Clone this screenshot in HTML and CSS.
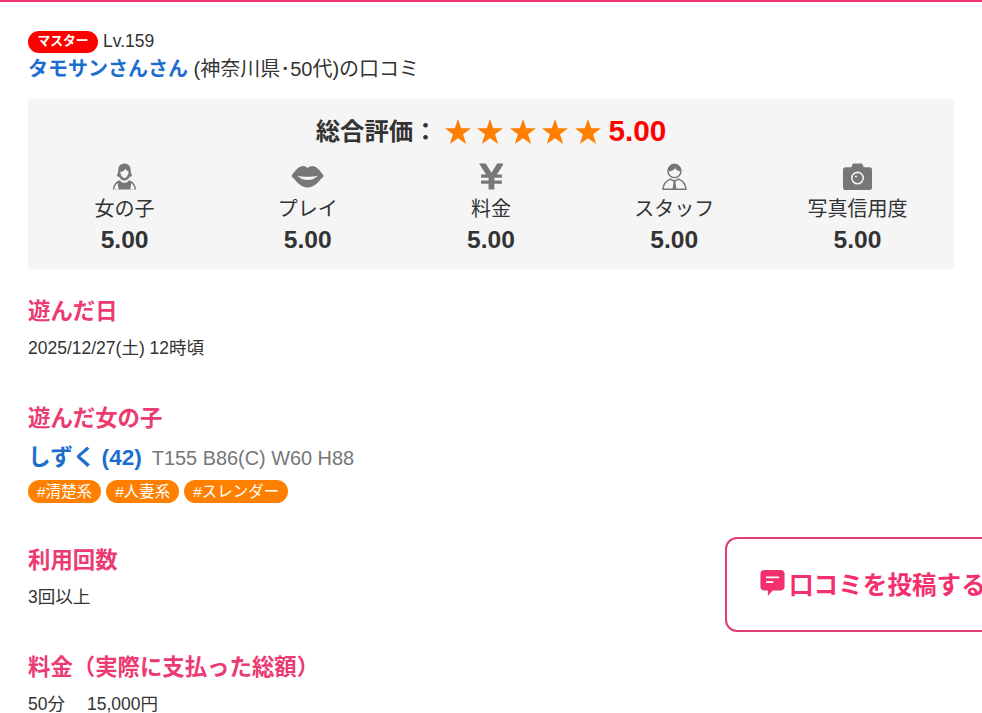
FILE: index.html
```html
<html>
	<head>
		<meta charset="utf-8">
		<link rel="stylesheet" href="styles.css">
	</head>
	<body>
		<div class="review">
			<div class="user">
				<span class="rank">マスター</span>
				<span class="level">Lv.159</span>
			</div>
			<div class="title">
				<a href="#" class="name">タモサンさんさん</a> (神奈川県･50代)の口コミ
			</div>
			<div class="rating">
				<div class="total">
					<span class="total-label">総合評価：</span>
					<span class="stars">
						<svg class="star" viewBox="0 0 26 25"><path d="M13 0l3.200 9.300H26l-7.900 5.900 3 9.800L13 19.200 4.900 25l3-9.800L0 9.300h9.800z"/></svg>
						<svg class="star" viewBox="0 0 26 25"><path d="M13 0l3.200 9.300H26l-7.900 5.900 3 9.800L13 19.200 4.900 25l3-9.800L0 9.300h9.800z"/></svg>
						<svg class="star" viewBox="0 0 26 25"><path d="M13 0l3.200 9.300H26l-7.900 5.900 3 9.800L13 19.200 4.900 25l3-9.800L0 9.300h9.800z"/></svg>
						<svg class="star" viewBox="0 0 26 25"><path d="M13 0l3.200 9.300H26l-7.900 5.900 3 9.800L13 19.200 4.900 25l3-9.800L0 9.300h9.800z"/></svg>
						<svg class="star" viewBox="0 0 26 25"><path d="M13 0l3.200 9.300H26l-7.900 5.900 3 9.800L13 19.200 4.900 25l3-9.800L0 9.300h9.800z"/></svg>
					</span>
					<span class="score">5.00</span>
				</div>
				<div class="items">
					<div class="item">
						<svg class="icon" viewBox="0 0 24 26">
							<path d="M12 .5c-4 0-6 3-6 6.500 0 2-.5 3.500-1.500 5.500l2.500 1c1 2 3 3.500 5 3.500s4-1.500 5-3.500l2.500-1c-1-2-1.500-3.500-1.500-5.500C18 3.500 16 .5 12 .5z" fill="#777"/>
							<path d="M8 8.500c2 0 4-1 5-3 1 1.500 2 2.500 3 3 0 3-2 6-4 6s-4-3-4-6z" fill="#f5f5f5"/>
							<path d="M7.500 16.500C4 17.500 1.500 20 .8 25.500h22.400c-.7-5.500-3.200-8-6.700-9-1 1.500-2.800 2.500-4.500 2.500s-3.500-1-4.500-2.500z" fill="#777"/>
							<path d="M2.200 25.500c.3-2.500 1-4.500 3.200-6.300l1 6.300zM21.800 25.500c-.3-2.500-1-4.500-3.200-6.300l-1 6.300z" fill="#f5f5f5"/>
						</svg>
						<div class="label">女の子</div>
						<div class="value">5.00</div>
					</div>
					<div class="item">
						<svg class="icon" viewBox="0 0 32 26">
							<path d="M.5 12.500C4 7 8 3 11.500 3c1.800 0 3.300.8 4.500 1.800C17.200 3.800 18.700 3 20.500 3 24 3 28 7 31.500 12.500c-.8 1.500-1.800 2-2.800 3C25.500 20 21 23.500 16 23.500S6.500 20 3.300 15.500c-1-1-2-1.500-2.800-3z" fill="#777"/>
							<path d="M6 12.300c3 .7 6.500 1 10 1s7-.3 10-1c-2.800 2.700-6 4-10 4s-7.200-1.300-10-4z" fill="#f5f5f5"/>
						</svg>
						<div class="label">プレイ</div>
						<div class="value">5.00</div>
					</div>
					<div class="item">
						<svg class="icon" viewBox="0 0 24 26">
							<path d="M0 .5h6.500L12 9.500l5.500-9H24L17.200 11H22v3.200h-7.200v2.600H22V20h-7.200v5.500H9.200V20H2v-3.200h7.200v-2.600H2V11h4.800z" fill="#777"/>
						</svg>
						<div class="label">料金</div>
						<div class="value">5.00</div>
					</div>
					<div class="item">
						<svg class="icon" viewBox="0 0 24 26">
							<circle cx="12" cy="7.800" r="6.300" fill="#f5f5f5" stroke="#777" stroke-width="1.400"/>
							<path d="M5.700 8C6 3 9 .8 12 .8S18 3 18.300 8c-2.300 0-4.500-1.200-5.500-3-1.300 2-4 3-7.100 3z" fill="#777"/>
							<path d="M8 15.500C4 17 1.400 20 .9 25.300h22.200c-.5-5.300-3.100-8.300-7.100-9.800-1 1-2.500 1.500-4 1.500s-3-.5-4-1.500z" fill="#f5f5f5" stroke="#777" stroke-width="1.400"/>
							<path d="M10.500 17.500h3l-.5 2 1 5.800h-4l1-5.800z" fill="#777"/>
						</svg>
						<div class="label">スタッフ</div>
						<div class="value">5.00</div>
					</div>
					<div class="item">
						<svg class="icon" viewBox="0 0 28 26">
							<path d="M2.500 4H8l1.500-3.500h9L20 4h5.500C27 4 28 5 28 6.500v17c0 1.500-1 2.500-2.500 2.500h-23C1 26 0 25 0 23.500v-17C0 5 1 4 2.500 4z" fill="#777"/>
							<circle cx="14" cy="14.500" r="5.500" fill="none" stroke="#f5f5f5" stroke-width="1.500"/>
							<circle cx="12.500" cy="13" r="1" fill="#f5f5f5"/>
						</svg>
						<div class="label">写真信用度</div>
						<div class="value">5.00</div>
					</div>
				</div>
			</div>
			<div class="section">
				<h3>遊んだ日</h3>
				<p>2025/12/27(土) 12時頃</p>
			</div>
			<div class="section">
				<h3>遊んだ女の子</h3>
				<div class="girl">
					<a href="#" class="girl-name">しずく (42)</a>
					<span class="size">T155 B86(C) W60 H88</span>
				</div>
				<div class="tags">
					<span class="tag">#清楚系</span>
					<span class="tag">#人妻系</span>
					<span class="tag">#スレンダー</span>
				</div>
			</div>
			<div class="section">
				<h3>利用回数</h3>
				<p>3回以上</p>
			</div>
			<div class="section">
				<h3>料金（実際に支払った総額）</h3>
				<p>50分<span class="fee">15,000円</span></p>
			</div>
		</div>
		<a href="#" class="post">
			<svg class="post-icon" viewBox="0 0 26 28">
				<path d="M4 0h18c2.200 0 4 1.800 4 4v14c0 2.200-1.800 4-4 4H13l-5 6v-6H4c-2.200 0-4-1.800-4-4V4c0-2.200 1.800-4 4-4z" fill="#f3306e"/>
				<path d="M6 7h14v2H6zM6 12h8v2H6z" fill="#fff"/>
			</svg>
			口コミを投稿する
		</a>
	</body>
</html>
```

FILE: styles.css
```css
html{
	overflow: hidden;
	height: 713px;
}
body{
	margin: 0;
	height: 711px;
	overflow: hidden;
	border-top: 2px solid #f3306e;
	color: #333;
	font-family: "Liberation Sans", "Noto Sans CJK JP", sans-serif;
	font-size: 17.500px;
}
.review{
	padding: 27px 28px 0;
}
.user{
	height: 25px;
	display: flex;
	align-items: center;
	gap: 5px;
}
.rank{
	background: #f00;
	color: #fff;
	font-size: 12.800px;
	font-weight: bold;
	line-height: 19px;
	height: 22px;
	width: 70px;
	text-align: center;
	border-radius: 11px;
}
.title{
	font-size: 20px;
	line-height: 30px;
	margin-bottom: 15px;
}
.name{
	color: #1c6ecd;
	font-size: 20px;
	font-weight: bold;
	text-decoration: none;
}
.rating{
	background: #f5f5f5;
	height: 170px;
	box-sizing: border-box;
	padding: 14px 5px 0;
	margin-bottom: 26px;
}
.total{
	font-size: 24.400px;
	font-weight: bold;
	line-height: 34px;
	height: 36px;
	display: flex;
	justify-content: center;
	align-items: center;
}
.total-label{
	padding-top: 2px;
}
.stars{
	display: flex;
	gap: 6.500px;
	margin: 0 8px 0 7px;
}
.star{
	width: 26px;
	height: 25px;
	fill: #ff8000;
}
.score{
	color: #f00;
	font-size: 29.700px;
}
.items{
	display: flex;
	margin-top: 14px;
}
.item{
	flex: 1;
	text-align: center;
}
.icon{
	height: 27px;
	display: block;
	margin: 0 auto;
}
.label{
	font-size: 20px;
	line-height: 32px;
	margin-top: 3px;
}
.value{
	font-size: 24.600px;
	font-weight: bold;
	line-height: 30px;
}
.section{
	margin-top: 25px;
}
h3{
	margin: 0;
	color: #ec3a72;
	font-size: 22.400px;
	font-weight: bold;
	line-height: 34px;
}
p{
	margin: 7px 0 42px;
	line-height: 24px;
}
.fee{
	margin-left: 22px;
}
.girl{
	display: flex;
	align-items: baseline;
	gap: 10px;
	margin-top: 5px;
	line-height: 34px;
}
.girl-name{
	color: #1c6ecd;
	font-size: 22.600px;
	font-weight: bold;
	text-decoration: none;
}
.size{
	color: #777;
	font-size: 19.900px;
}
.tags{
	display: flex;
	gap: 5px;
	margin-top: 5px;
	margin-bottom: 41px;
}
.tag{
	background: #ff8000;
	color: #fff;
	font-size: 15.500px;
	line-height: 23px;
	padding: 0 9px;
	border-radius: 12px;
}
.post{
	position: fixed;
	left: 725px;
	top: 537px;
	width: 300px;
	height: 95px;
	box-sizing: border-box;
	border: 2px solid #e03d72;
	border-radius: 12px;
	background: #fff;
	color: #f3306e;
	font-size: 24.600px;
	font-weight: bold;
	text-decoration: none;
	display: flex;
	align-items: center;
	padding: 0 0 3px 33px;
	gap: 4px;
	white-space: nowrap;
}
.post-icon{
	width: 25px;
	height: 26px;
}
```
